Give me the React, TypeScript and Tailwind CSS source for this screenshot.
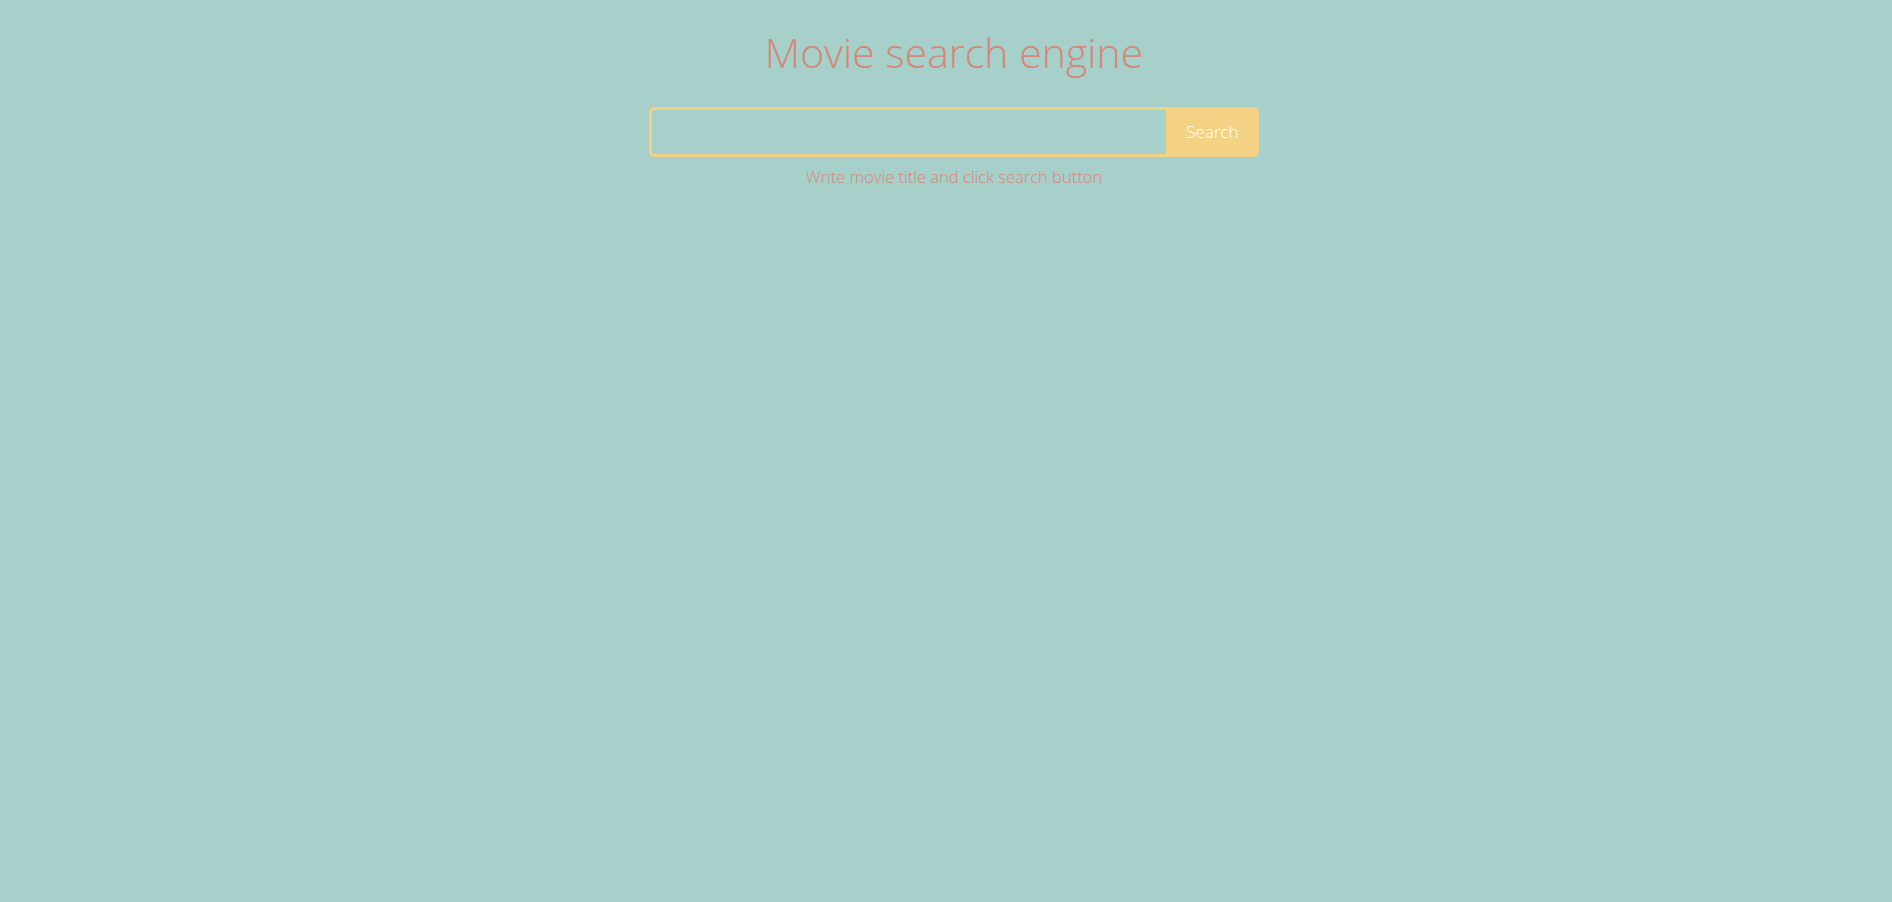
export default function App() {
  return (
    <div
      className="min-h-[902px] w-full bg-[#a7d0cb] pl-4"
      style={{ fontFamily: '"Open Sans", "Liberation Sans", sans-serif' }}
    >
      <div className="flex flex-col items-center pt-[24px]">
        <h1 className="text-[41px] font-light leading-[56px] text-[#d3887a]">Movie search engine</h1>
        <form className="mt-[27px] flex w-[610px]" onSubmit={(e) => e.preventDefault()}>
          <input
            type="text"
            className="h-[50px] flex-1 rounded-l-[5px] border-[3px] border-r-0 border-[#f4d285] bg-transparent px-3 text-[17px] outline-none"
          />
          <button
            type="submit"
            className="h-[50px] w-[93px] rounded-r-[5px] bg-[#f4d285] text-[17px] font-light text-white"
          >
            Search
          </button>
        </form>
        <p className="mt-[8px] text-[16.5px] font-light text-[#d3887a]">Write movie title and click search button</p>
      </div>
    </div>
  );
}
